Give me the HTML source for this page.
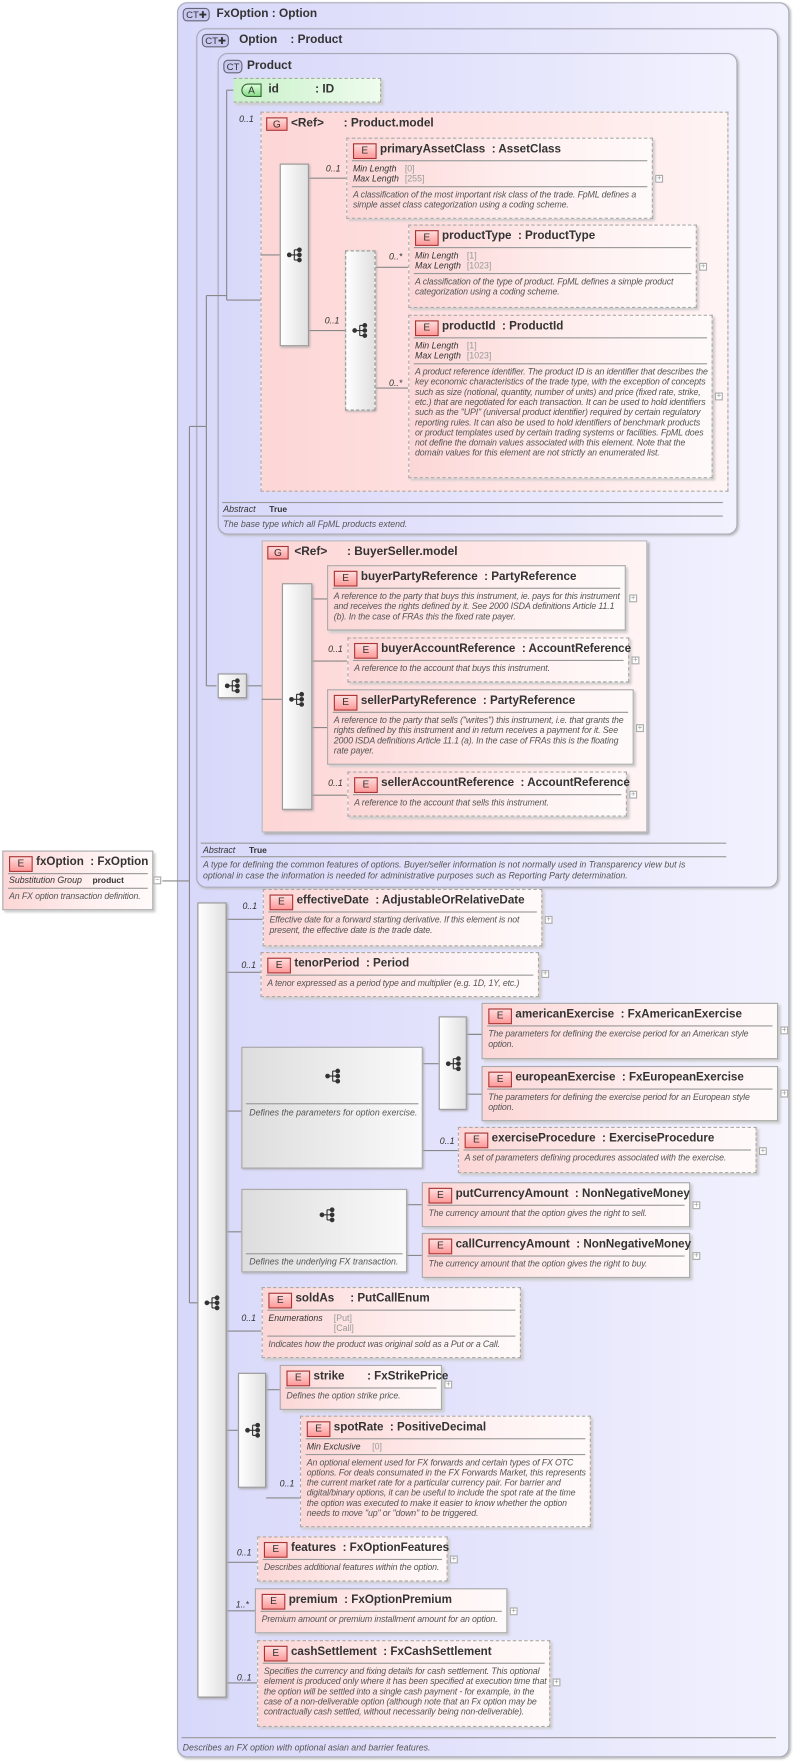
<!DOCTYPE html>
<html><head><meta charset="utf-8"><style>
html,body{margin:0;padding:0;background:#fff;width:795px;height:1761px;overflow:hidden}
#w{position:absolute;left:0;top:0;width:705px;height:1561px;transform:scale(1.1277,1.128);transform-origin:0 0;font-family:"Liberation Sans",sans-serif;color:#333}
#w div{box-sizing:border-box}
.a{position:absolute}
.ct{position:absolute;border:1px solid #a8a8b8;border-radius:9px;background:linear-gradient(90deg,#d8d8fa,#e6e6fc 60%,#f2f2fe);box-shadow:1px 1px 2px #bbb}
.ctb{position:absolute;font-size:8.5px;border:1px solid #667;border-radius:4px;background:#c8c8f0;padding:0 2px;height:12px;line-height:11px;color:#333}
.t{position:absolute;font-size:10.5px;font-weight:bold;color:#333;white-space:pre}
.e{position:absolute;border:1px solid #aaa;background:linear-gradient(90deg,#fcd6d6,#fff0f0 60%,#fffafa);box-shadow:2px 2px 2px #ccc}
.o{border:1px dashed #aaa}
.g{position:absolute;border:1px dashed #aaa;background:linear-gradient(90deg,#fdd6d6,#ffe6e6 60%,#fff4f4)}
.gs{border:1px solid #bbb;box-shadow:2px 2px 2px #aaa}
.h{height:19px;position:relative;font-size:10.3px;font-weight:bold;white-space:pre;padding:3px 0 0 29px;line-height:13px}
.B{position:absolute;left:5px;top:4px;width:19px;height:12px;border:1px solid #a33;background:linear-gradient(#fdd,#f99);font-size:9px;font-weight:normal;text-align:center;line-height:11px;color:#333}
.hr{border-top:1px solid #999;margin:0 4px}
.d{font-size:7.8px;font-style:italic;line-height:9px;padding:2px 2px 2px 5px;color:#555;letter-spacing:-0.12px}
.f{font-size:7.8px;line-height:9px;padding:2px 5px;color:#333;font-style:italic}
.f span{font-style:normal;color:#999;position:absolute;left:46px}
.f div{position:relative}
.p{position:absolute;width:7px;height:7px;border:1px solid #aaa;background:#fff;font-size:7px;line-height:5px;text-align:center;color:#999}
.sq{position:absolute;border:1px solid #999;background:linear-gradient(90deg,#fff,#e0e0e0);box-shadow:1px 1px 2px #aaa}
.ch{position:absolute;border:1px solid #aaa;background:linear-gradient(90deg,#ddd,#fafafa);box-shadow:1px 1px 2px #aaa}
.m{position:absolute;font-size:7.8px;font-style:italic;color:#333}
svg.ic{position:absolute;width:14px;height:14px}
</style></head><body><div id="w">
<svg width="0" height="0" style="position:absolute"><defs><symbol id="s" viewBox="0 0 14 14"><g fill="#333" stroke="#333" stroke-width="1"><circle cx="2.5" cy="7" r="1.6"/><line x1="2.5" y1="7" x2="7" y2="7"/><line x1="7" y1="2.5" x2="7" y2="11.5"/><line x1="7" y1="2.5" x2="11" y2="2.5"/><line x1="7" y1="11.5" x2="11" y2="11.5"/><line x1="7" y1="7" x2="11" y2="7"/><circle cx="11.5" cy="2.5" r="1.6"/><circle cx="11.5" cy="7" r="1.6"/><circle cx="11.5" cy="11.5" r="1.6"/></g></symbol></defs></svg>

<div class="ct" style="left:157px;top:2px;width:543px;height:1556px"></div>
<div class="ctb" style="left:162px;top:7px">CT✚</div><div class="t" style="left:192px;top:6px">FxOption : Option</div>
<div class="ct" style="left:174px;top:25px;width:516px;height:762px"></div>
<div class="ctb" style="left:179px;top:30px">CT✚</div><div class="t" style="left:212px;top:29px">Option    : Product</div>
<div class="ct" style="left:193px;top:47px;width:461px;height:427px"></div>
<div class="ctb" style="left:198px;top:53px">CT</div><div class="t" style="left:219px;top:52px">Product</div>

<div class="a" style="left:197px;top:445px;width:444px;border-top:1px solid #999"></div>
<div class="m" style="left:198px;top:447px">Abstract <b style="font-style:normal;margin-left:10px;font-size:7.5px">True</b></div>
<div class="a" style="left:197px;top:457px;width:444px;border-top:1px solid #999"></div>
<div class="m" style="left:198px;top:460px;color:#555">The base type which all FpML products extend.</div>

<div class="a" style="left:178px;top:747px;width:466px;border-top:1px solid #999"></div>
<div class="m" style="left:180px;top:749px">Abstract <b style="font-style:normal;margin-left:10px;font-size:7.5px">True</b></div>
<div class="a" style="left:178px;top:759px;width:466px;border-top:1px solid #999"></div>
<div class="m" style="left:180px;top:762px;color:#555;line-height:9.5px">A type for defining the common features of options. Buyer/seller information is not normally used in Transparency view but is<br>optional in case the information is needed for administrative purposes such as Reporting Party determination.</div>

<div class="a" style="left:161px;top:1540px;width:527px;border-top:1px solid #999"></div>
<div class="m" style="left:162px;top:1545px;color:#555">Describes an FX option with optional asian and barrier features.</div>

<div class="g" style="left:231px;top:99px;width:415px;height:337px"></div>
<div class="B a" style="left:236px;top:104px;position:absolute">G</div><div class="t" style="left:258px;top:103px">&lt;Ref&gt;      : Product.model</div>
<div class="g gs" style="left:232px;top:479px;width:342px;height:259px"></div>
<div class="B a" style="left:237px;top:484px;position:absolute">G</div><div class="t" style="left:261px;top:483px">&lt;Ref&gt;      : BuyerSeller.model</div>

<svg class="a" style="left:0;top:0" width="705" height="1561"><g stroke="#888" stroke-width="1" fill="none">
<path d="M144 781H168M168 378V1155M168 1155H176M168 378H183M183 262V608M183 608H192M219 608H232M183 262H201M201 80V266M201 80H208M201 266H231"/>
<path d="M231 226H248M274 158H307M274 293H306M333 237H362M333 344H362"/>
<path d="M232 620H250M277 531H290M277 586H308M277 645H290M277 705H308"/>
<path d="M201 815H233M201 862H231M201 985H214M201 1092H214M201 1180H232M201 1268H211M201 1385H228M201 1428H226M201 1492H228"/>
<path d="M375 943H389M414 917H427M414 970H427M375 1020H406M361 1068H374M361 1113H374M236 1232H248M236 1328H266"/>
</g></svg>

<div class="a" style="left:207px;top:69px;width:131px;height:22px;border:1px dashed #aaa;border-left:none;background:linear-gradient(90deg,#c8f0c8,#eefcee);box-shadow:2px 2px 2px #ccc"></div>
<div class="a" style="left:214px;top:74px;width:18px;height:12px;border:1px solid #363;border-radius:6px 0 0 6px;background:linear-gradient(#dfd,#8d8);font-size:9px;text-align:center;line-height:11px">A</div>
<div class="t" style="left:238px;top:73px">id           : ID</div>

<div class="sq" style="left:248px;top:145px;width:26px;height:162px"></div><svg class="ic" style="left:254px;top:219px"><use href="#s"/></svg>
<div class="sq" style="left:306px;top:222px;width:27px;height:142px;border-style:dashed"></div><svg class="ic" style="left:312px;top:286px"><use href="#s"/></svg>
<div class="sq" style="left:193px;top:597px;width:26px;height:22px"></div><svg class="ic" style="left:199px;top:601px"><use href="#s"/></svg>
<div class="sq" style="left:250px;top:517px;width:27px;height:201px"></div><svg class="ic" style="left:256px;top:613px"><use href="#s"/></svg>
<div class="sq" style="left:175px;top:800px;width:26px;height:705px"></div><svg class="ic" style="left:181px;top:1148px"><use href="#s"/></svg>
<div class="sq" style="left:389px;top:901px;width:25px;height:83px"></div><svg class="ic" style="left:395px;top:936px"><use href="#s"/></svg>
<div class="sq" style="left:211px;top:1217px;width:25px;height:102px"></div><svg class="ic" style="left:217px;top:1261px"><use href="#s"/></svg>

<div class="ch" style="left:214px;top:928px;width:161px;height:108px"></div><svg class="ic" style="left:288px;top:947px"><use href="#s"/></svg>
<div class="a" style="left:218px;top:978px;width:153px;border-top:1px solid #999"></div><div class="m" style="left:221px;top:982px;color:#555">Defines the parameters for option exercise.</div>
<div class="ch" style="left:214px;top:1054px;width:147px;height:74px"></div><svg class="ic" style="left:283px;top:1070px"><use href="#s"/></svg>
<div class="a" style="left:218px;top:1111px;width:139px;border-top:1px solid #999"></div><div class="m" style="left:221px;top:1114px;color:#555">Defines the underlying FX transaction.</div>

<div class="e o" style="left:307px;top:122px;width:272px;height:72px"><div class="h"><span class="B">E</span>primaryAssetClass  : AssetClass</div><div class="hr"></div><div class="f"><div>Min Length<span>[0]</span></div><div>Max Length<span>[255]</span></div></div><div class="hr"></div><div class="d">A classification of the most important risk class of the trade. FpML defines a simple asset class categorization using a coding scheme.</div></div><div class="p" style="left:581px;top:155px">+</div>
<div class="m" style="left:289px;top:145px">0..1</div>

<div class="e o" style="left:362px;top:199px;width:256px;height:74px"><div class="h"><span class="B">E</span>productType  : ProductType</div><div class="hr"></div><div class="f"><div>Min Length<span>[1]</span></div><div>Max Length<span>[1023]</span></div></div><div class="hr"></div><div class="d">A classification of the type of product. FpML defines a simple product categorization using a coding scheme.</div></div><div class="p" style="left:620px;top:233px">+</div>
<div class="m" style="left:345px;top:223px">0..*</div><div class="m" style="left:288px;top:280px">0..1</div>

<div class="e o" style="left:362px;top:279px;width:270px;height:145px"><div class="h"><span class="B">E</span>productId  : ProductId</div><div class="hr"></div><div class="f"><div>Min Length<span>[1]</span></div><div>Max Length<span>[1023]</span></div></div><div class="hr"></div><div class="d">A product reference identifier. The product ID is an identifier that describes the key economic characteristics of the trade type, with the exception of concepts such as size (notional, quantity, number of units) and price (fixed rate, strike, etc.) that are negotiated for each transaction. It can be used to hold identifiers such as the "UPI" (universal product identifier) required by certain regulatory reporting rules. It can also be used to hold identifiers of benchmark products or product templates used by certain trading systems or facilities. FpML does not define the domain values associated with this element. Note that the domain values for this element are not strictly an enumerated list.</div></div><div class="p" style="left:634px;top:348px">+</div>
<div class="m" style="left:345px;top:335px">0..*</div><div class="m" style="left:212px;top:101px">0..1</div>

<div class="e" style="left:290px;top:501px;width:265px;height:58px"><div class="h"><span class="B">E</span>buyerPartyReference  : PartyReference</div><div class="hr"></div><div class="d">A reference to the party that buys this instrument, ie. pays for this instrument and receives the rights defined by it. See 2000 ISDA definitions Article 11.1 (b). In the case of FRAs this the fixed rate payer.</div></div><div class="p" style="left:558px;top:527px">+</div>
<div class="e o" style="left:308px;top:565px;width:250px;height:40px"><div class="h"><span class="B">E</span>buyerAccountReference  : AccountReference</div><div class="hr"></div><div class="d">A reference to the account that buys this instrument.</div></div><div class="p" style="left:560px;top:582px">+</div>
<div class="m" style="left:291px;top:571px">0..1</div>
<div class="e" style="left:290px;top:611px;width:272px;height:67px"><div class="h"><span class="B">E</span>sellerPartyReference  : PartyReference</div><div class="hr"></div><div class="d">A reference to the party that sells ("writes") this instrument, i.e. that grants the rights defined by this instrument and in return receives a payment for it. See 2000 ISDA definitions Article 11.1 (a). In the case of FRAs this is the floating rate payer.</div></div><div class="p" style="left:564px;top:642px">+</div>
<div class="e o" style="left:308px;top:684px;width:248px;height:40px"><div class="h"><span class="B">E</span>sellerAccountReference  : AccountReference</div><div class="hr"></div><div class="d">A reference to the account that sells this instrument.</div></div><div class="p" style="left:558px;top:701px">+</div>
<div class="m" style="left:291px;top:690px">0..1</div>

<div class="e" style="left:2px;top:754px;width:134px;height:53px"><div class="h"><span class="B">E</span>fxOption  : FxOption</div><div class="hr"></div><div class="f" style="padding-top:1px"><div>Substitution Group<b style="font-style:normal;position:absolute;left:74px;font-size:7.5px">product</b></div></div><div class="hr"></div><div class="d">An FX option transaction definition.</div></div><div class="p" style="left:136px;top:777px;line-height:6px">−</div>

<div class="e o" style="left:233px;top:788px;width:248px;height:51px"><div class="h"><span class="B">E</span>effectiveDate  : AdjustableOrRelativeDate</div><div class="hr"></div><div class="d">Effective date for a forward starting derivative. If this element is not present, the effective date is the trade date.</div></div><div class="p" style="left:483px;top:812px">+</div>
<div class="m" style="left:215px;top:799px">0..1</div>
<div class="e o" style="left:231px;top:844px;width:247px;height:40px"><div class="h"><span class="B">E</span>tenorPeriod  : Period</div><div class="hr"></div><div class="d">A tenor expressed as a period type and multiplier (e.g. 1D, 1Y, etc.)</div></div><div class="p" style="left:480px;top:860px">+</div>
<div class="m" style="left:214px;top:851px">0..1</div>

<div class="e" style="left:427px;top:889px;width:263px;height:50px"><div class="h"><span class="B">E</span>americanExercise  : FxAmericanExercise</div><div class="hr"></div><div class="d">The parameters for defining the exercise period for an American style option.</div></div><div class="p" style="left:692px;top:910px">+</div>
<div class="e" style="left:427px;top:945px;width:263px;height:49px"><div class="h"><span class="B">E</span>europeanExercise  : FxEuropeanExercise</div><div class="hr"></div><div class="d">The parameters for defining the exercise period for an European style option.</div></div><div class="p" style="left:692px;top:966px">+</div>
<div class="e o" style="left:406px;top:999px;width:265px;height:41px"><div class="h"><span class="B">E</span>exerciseProcedure  : ExerciseProcedure</div><div class="hr"></div><div class="d">A set of parameters defining procedures associated with the exercise.</div></div><div class="p" style="left:673px;top:1017px">+</div>
<div class="m" style="left:390px;top:1007px">0..1</div>

<div class="e" style="left:374px;top:1048px;width:238px;height:40px"><div class="h"><span class="B">E</span>putCurrencyAmount  : NonNegativeMoney</div><div class="hr"></div><div class="d">The currency amount that the option gives the right to sell.</div></div><div class="p" style="left:614px;top:1065px">+</div>
<div class="e" style="left:374px;top:1093px;width:238px;height:40px"><div class="h"><span class="B">E</span>callCurrencyAmount  : NonNegativeMoney</div><div class="hr"></div><div class="d">The currency amount that the option gives the right to buy.</div></div><div class="p" style="left:614px;top:1110px">+</div>

<div class="e o" style="left:232px;top:1141px;width:230px;height:63px"><div class="h"><span class="B">E</span>soldAs     : PutCallEnum</div><div class="hr"></div><div class="f"><div>Enumerations<span style="left:58px">[Put]</span></div><div><span style="left:58px">[Call]</span>&nbsp;</div></div><div class="hr"></div><div class="d">Indicates how the product was original sold as a Put or a Call.</div></div>
<div class="m" style="left:214px;top:1164px">0..1</div>

<div class="e" style="left:248px;top:1210px;width:144px;height:40px"><div class="h"><span class="B">E</span>strike       : FxStrikePrice</div><div class="hr"></div><div class="d">Defines the option strike price.</div></div><div class="p" style="left:394px;top:1224px">+</div>
<div class="e o" style="left:266px;top:1255px;width:258px;height:99px"><div class="h"><span class="B">E</span>spotRate  : PositiveDecimal</div><div class="hr"></div><div class="f"><div>Min Exclusive<span style="left:58px">[0]</span></div></div><div class="hr"></div><div class="d">An optional element used for FX forwards and certain types of FX OTC options. For deals consumated in the FX Forwards Market, this represents the current market rate for a particular currency pair. For barrier and digital/binary options, it can be useful to include the spot rate at the time the option was executed to make it easier to know whether the option needs to move "up" or "down" to be triggered.</div></div>
<div class="m" style="left:248px;top:1311px">0..1</div>

<div class="e o" style="left:228px;top:1362px;width:169px;height:40px"><div class="h"><span class="B">E</span>features  : FxOptionFeatures</div><div class="hr"></div><div class="d" style="white-space:nowrap">Describes additional features within the option.</div></div><div class="p" style="left:399px;top:1379px">+</div>
<div class="m" style="left:210px;top:1372px">0..1</div>
<div class="e" style="left:226px;top:1408px;width:224px;height:40px"><div class="h"><span class="B">E</span>premium  : FxOptionPremium</div><div class="hr"></div><div class="d" style="white-space:nowrap">Premium amount or premium installment amount for an option.</div></div><div class="p" style="left:452px;top:1425px">+</div>
<div class="m" style="left:209px;top:1418px">1..*</div>
<div class="e o" style="left:228px;top:1454px;width:260px;height:77px"><div class="h"><span class="B">E</span>cashSettlement  : FxCashSettlement</div><div class="hr"></div><div class="d">Specifies the currency and fixing details for cash settlement. This optional element is produced only where it has been specified at execution time that the option will be settled into a single cash payment - for example, in the case of a non-deliverable option (although note that an Fx option may be contractually cash settled, without necessarily being non-deliverable).</div></div><div class="p" style="left:490px;top:1488px">+</div>
<div class="m" style="left:210px;top:1483px">0..1</div>
</div></body></html>
